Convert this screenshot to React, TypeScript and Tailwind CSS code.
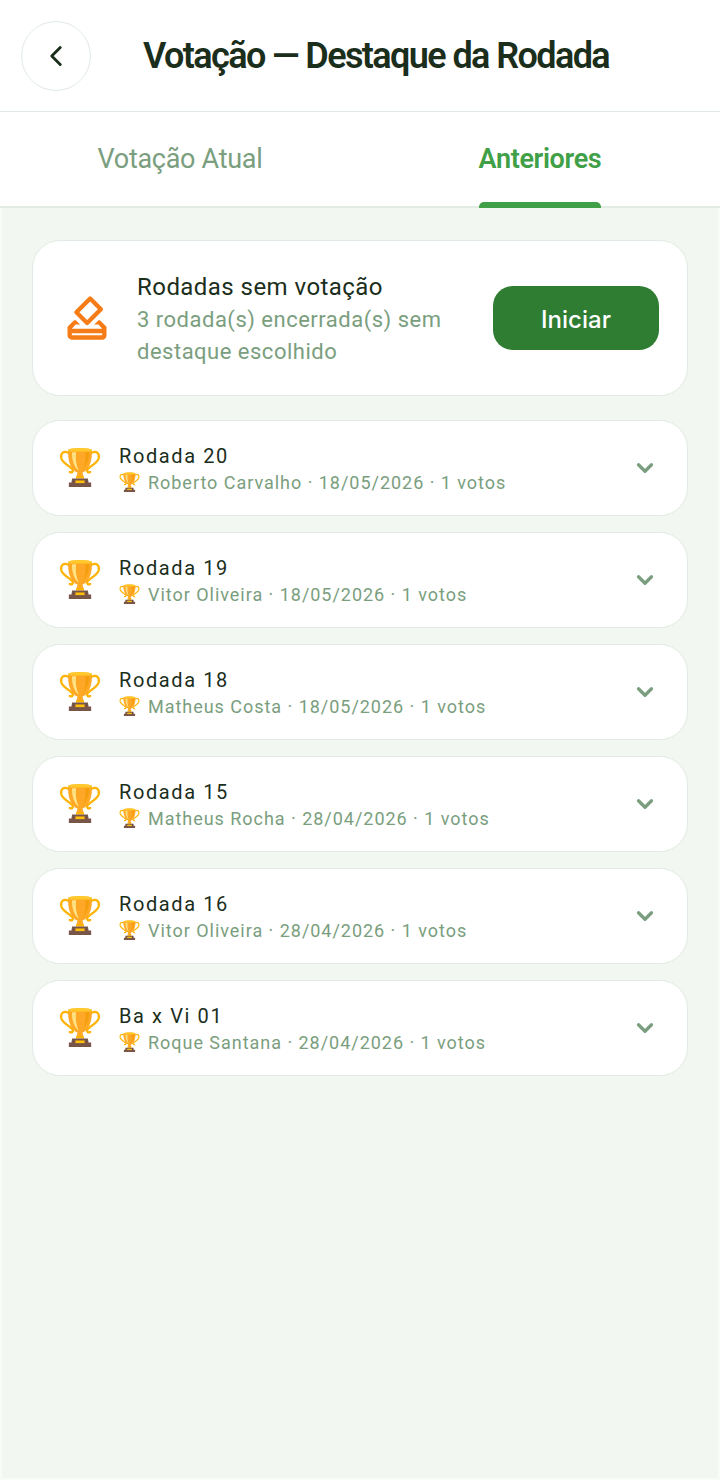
import { ChevronDown, ChevronLeft } from "lucide-react";
import { MdOutlineHowToVote } from "react-icons/md";

const rounds = [
  { title: "Rodada 20", info: "Roberto Carvalho · 18/05/2026 · 1 votos" },
  { title: "Rodada 19", info: "Vitor Oliveira · 18/05/2026 · 1 votos" },
  { title: "Rodada 18", info: "Matheus Costa · 18/05/2026 · 1 votos" },
  { title: "Rodada 15", info: "Matheus Rocha · 28/04/2026 · 1 votos" },
  { title: "Rodada 16", info: "Vitor Oliveira · 28/04/2026 · 1 votos" },
  { title: "Ba x Vi 01", info: "Roque Santana · 28/04/2026 · 1 votos" },
];

function Trophy({ className }: { className: string }) {
  return (
    <svg viewBox="0 0 64 64" className={className}>
      <path d="M15 9C7 5 2 9 3.500 17c2 8 12 11 17 17 2 3-1 6-4 4" fill="none" stroke="#ffb300" strokeWidth="3.5" strokeLinecap="round" />
      <path d="M49 9c8-4 13 0 11.500 8-2 8-12 11-17 17-2 3 1 6 4 4" fill="none" stroke="#ffb300" strokeWidth="3.5" strokeLinecap="round" />
      <path d="M14 4c5-3 31-3 36 0 1 15-3 30-14 35l1 7H27l1-7C17 34 13 19 14 4z" fill="#ffa726" />
      <path d="M14 4c5-3 31-3 36 0l-1 3H15z" fill="#ffca28" />
      <path d="M20 8h6c-1 9 0 19 4 28-7-5-11-17-10-28z" fill="#ffe082" />
      <path d="M40 8h6c0 9-3 18-8 24 2-8 3-16 2-24z" fill="#f59e0b" />
      <rect x="26" y="44" width="12" height="4" fill="#ffb300" />
      <path d="M20 48h24l1 6h4v7H15v-7h4z" fill="#795548" />
      <rect x="25" y="51" width="14" height="4" fill="#ffc107" />
    </svg>
  );
}

export default function App() {
  return (
    <div className="flex min-h-[1480px] w-[720px] flex-col bg-[#f2f7f1] font-['Roboto',sans-serif]">
      <header className="flex h-[112px] items-center border-b border-[#e1ebe3] bg-white pl-[21px]">
        <button className="flex size-[70px] items-center justify-center rounded-full border border-[#e1ebe3]">
          <ChevronLeft className="size-[34px] text-[#1b2e1b]" strokeWidth={2} />
        </button>
        <h1 className="ml-[52px] text-[36px] font-semibold tracking-[-1.6px] text-[#1b2e1b]">Votação — Destaque da Rodada</h1>
      </header>

      <nav className="flex h-[96px] border-b-2 border-[#e1ebe3] bg-white">
        <div className="flex flex-1 items-center justify-center text-[27px] tracking-[-0.3px] text-[#7a9e7e]">Votação Atual</div>
        <div className="relative flex flex-1 items-center justify-center text-[27px] font-semibold tracking-[-0.35px] text-[#3fa047]">
          Anteriores
          <span className="absolute bottom-[-2px] left-[119px] h-[6px] w-[122px] rounded-t-[5px] bg-[#3fa047]" />
        </div>
      </nav>

      <main className="flex flex-1 flex-col gap-4 border-x-2 border-b-2 border-[#f8fbf8] px-[30px] pt-8">
        <section className="mb-2 flex h-[156px] items-center rounded-[28px] border border-[#e1ebe3] bg-white pl-[28px] pr-[28px]">
          <MdOutlineHowToVote className="size-[52px] shrink-0 text-[#f57c17]" />
          <div className="ml-[24px] flex-1 pt-[3px]">
            <p className="text-[24px] leading-8 tracking-[0.45px] text-[#1b2e1b]">Rodadas sem votação</p>
            <p className="mt-px w-[320px] text-[22px] leading-8 tracking-[0.5px] text-[#7a9e7e]">3 rodada(s) encerrada(s) sem destaque escolhido</p>
          </div>
          <button className="flex h-[64px] w-[166px] items-center justify-center rounded-[20px] bg-[#2e7d32] pt-[4px] font-['Inter',sans-serif] text-[24px] font-medium text-white">Iniciar</button>
        </section>

        {rounds.map((round) => (
          <article key={round.title} className="flex h-[96px] items-center rounded-[28px] border border-[#e1ebe3] bg-white pl-[26px] pr-[29px]">
            <Trophy className="size-[42px] shrink-0" />
            <div className="ml-[18px] flex-1 pt-[2px]">
              <p className="text-[20px] leading-[26px] tracking-[1.6px] text-[#1b2e1b]">{round.title}</p>
              <p className="mt-px flex items-center text-[18px] leading-[26px] tracking-[0.97px] text-[#7a9e7e]">
                <Trophy className="mr-2 size-[21px] shrink-0" />
                {round.info}
              </p>
            </div>
            <ChevronDown className="size-[26px] text-[#7a9e7e]" strokeWidth={3} />
          </article>
        ))}
      </main>
    </div>
  );
}
